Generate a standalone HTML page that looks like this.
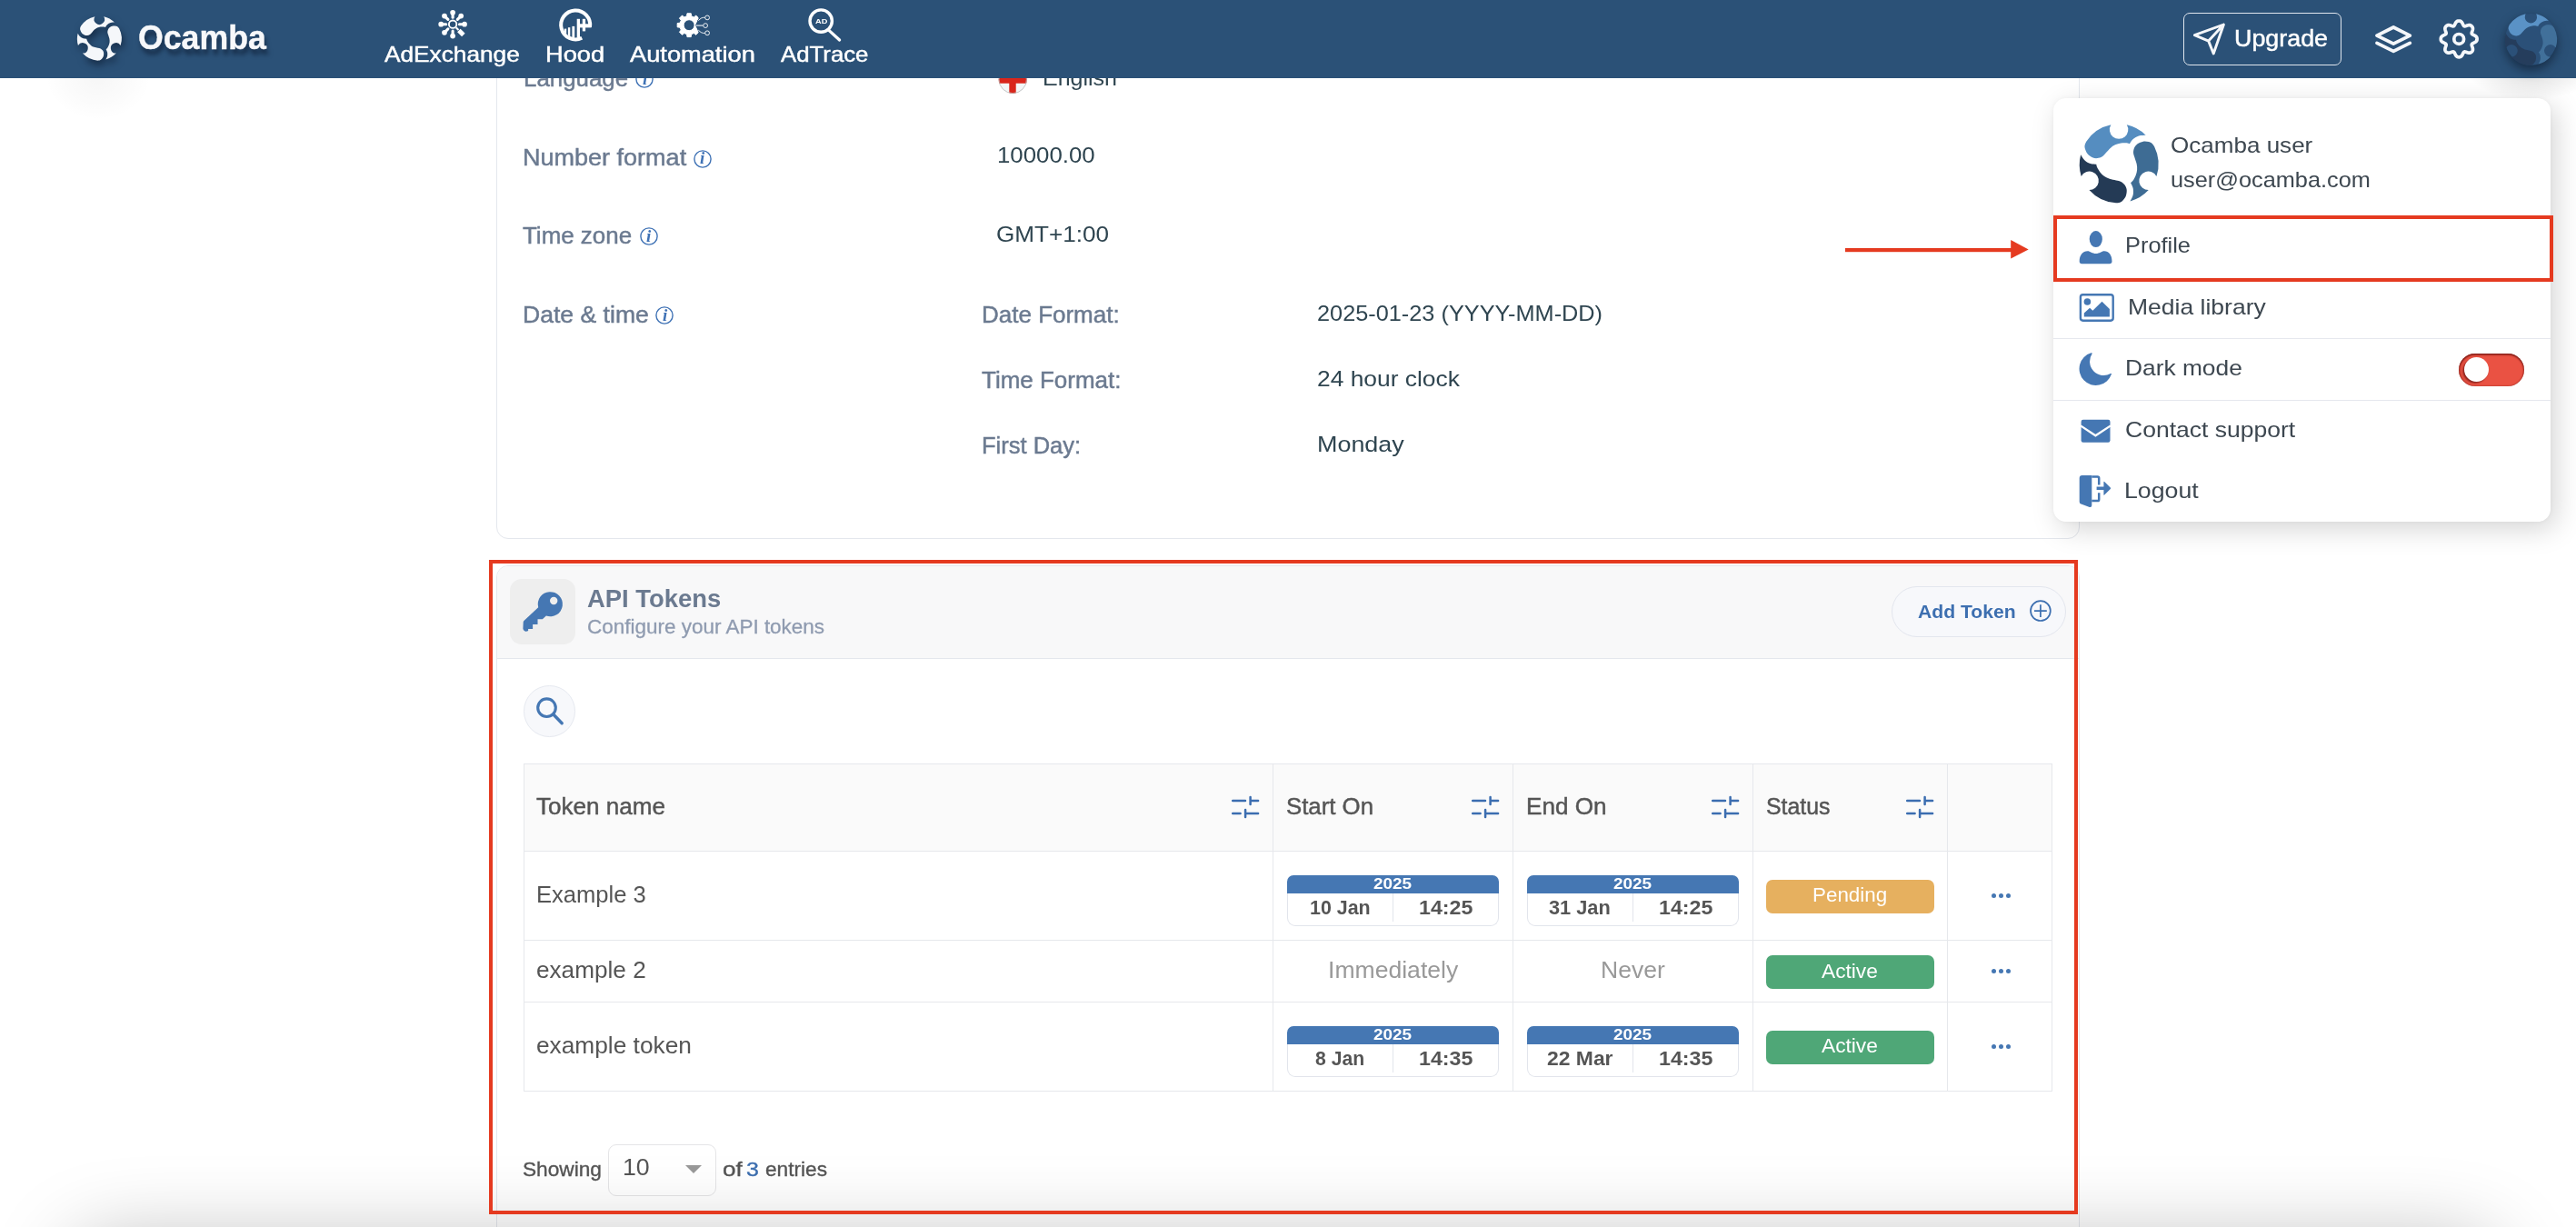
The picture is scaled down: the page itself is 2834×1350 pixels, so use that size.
<!DOCTYPE html>
<html lang="en"><head><meta charset="utf-8"><title>Ocamba - Profile</title>
<style>
html,body{margin:0;padding:0;}
body{width:2834px;height:1350px;overflow:hidden;position:relative;background:#fff;font-family:"Liberation Sans",sans-serif;}
.abs{position:absolute;box-sizing:border-box;}
.t{position:absolute;white-space:pre;line-height:1;z-index:5;transform-origin:0 50%;}
.t.nav{z-index:21;}
.t.dd{z-index:31;}
svg{position:absolute;overflow:visible;}
#nav{left:0;top:0;width:2834px;height:85.5px;background:#2b5177;z-index:20;}
.navi{z-index:21;}
.card{border:1px solid #e4e7ed;border-radius:13px;background:#fff;}
#card1{left:546px;top:-200px;width:1742px;height:792.5px;z-index:1;}
#card2{left:546px;top:621.5px;width:1742px;height:900px;z-index:1;overflow:hidden;}
#card2 .hd{left:0;top:0;width:1742px;height:102.5px;background:#f8f8f9;border-bottom:1px solid #e4e7ed;}
#iconbox{left:561px;top:637px;width:72px;height:72px;border-radius:13px;background:#eeeeee;z-index:2;}
#addbtn{left:2081.3px;top:645px;width:191.7px;height:56.4px;border-radius:29px;border:1px solid #e3e6ee;background:#f7f8fb;z-index:2;}
#searchbtn{left:576.2px;top:754.1px;width:56.6px;height:56.6px;border-radius:50%;border:1px solid #e6e9f0;background:#f7f8fb;z-index:2;}
.red{border:4px solid #e53a20;z-index:40;}
#red1{left:2259px;top:237.2px;width:550px;height:72.6px;}
#red2{left:538px;top:616px;width:1748.2px;height:719.6px;}
/* table */
#tbl{left:576px;top:840px;width:1682px;height:360.7px;border:1px solid #e6e8ec;z-index:2;background:#fff;}
#tbl .th{left:0;top:0;width:1680px;height:95px;background:#fafafa;}
.hl{position:absolute;left:0;width:1680px;height:1px;background:#e6e8ec;}
.vl{position:absolute;top:0;height:358.7px;width:1px;background:#e6e8ec;}
.badge{position:absolute;box-sizing:border-box;width:233px;height:55.8px;z-index:3;}
.badge i{position:absolute;left:0;top:0;width:233px;height:20px;background:#4577b3;border-radius:7px 7px 0 0;}
.badge u{position:absolute;box-sizing:border-box;left:0;top:20px;width:233px;height:35.8px;border:1px solid #e2e5ec;border-top:none;border-radius:0 0 9px 9px;background:#fff;}
.badge b{position:absolute;left:116.3px;top:20px;width:1px;height:31.5px;background:#e2e5ec;}
.st{position:absolute;width:184.7px;height:36.6px;border-radius:7px;z-index:3;}
.st.p{background:#e6b05f;}
.st.a{background:#4fa777;}
.dots{position:absolute;width:21px;height:5px;z-index:3;}
.dots i{position:absolute;top:0;width:5px;height:5px;border-radius:50%;background:#4577b3;}
#sel{left:669.3px;top:1259.2px;width:118.6px;height:56.6px;border:1px solid #e5e5e7;border-radius:9px;background:#fff;z-index:2;}
#tri{left:754.1px;top:1282px;width:0;height:0;border-left:9.1px solid transparent;border-right:9.1px solid transparent;border-top:9.3px solid #999;z-index:3;}
/* dropdown */
#dd{left:2259px;top:108px;width:547px;height:466px;border-radius:14px;background:#fff;z-index:30;box-shadow:6px 8px 30px rgba(0,0,0,.17),0 0 5px rgba(0,0,0,.04);}
.sep{position:absolute;left:2259px;width:547px;height:1px;background:#e6e8ee;z-index:31;}
#tog{left:2705.1px;top:388.9px;width:71.9px;height:36px;border-radius:18px;background:#ea5243;z-index:31;box-shadow:inset 0 1.5px 2px rgba(95,10,5,.75),inset 1.5px 0 2px rgba(95,10,5,.35),inset -1px 0 1.5px rgba(95,10,5,.3);}
#knob{left:2710.8px;top:393px;width:27.3px;height:27.3px;border-radius:50%;background:#fff;z-index:32;box-shadow:-1.5px 1.5px 2px rgba(70,0,0,.6);}
#upg{left:2402px;top:14px;width:174px;height:57.8px;border:1px solid #dfe6ee;border-radius:7px;z-index:21;}
#botshadow{left:80px;top:1366px;width:2666px;height:120px;border-radius:40px;background:#bbb;box-shadow:0 0 90px 0 rgba(0,0,0,.28);z-index:35;}
#logoshadow{left:50px;top:38px;width:116px;height:94px;background:radial-gradient(closest-side,rgba(0,0,0,.035),rgba(0,0,0,.016) 60%,rgba(0,0,0,0));z-index:0;}
#avshadow{left:2715px;top:46px;width:140px;height:64px;background:radial-gradient(closest-side,rgba(0,0,0,.13),rgba(0,0,0,.06) 55%,rgba(0,0,0,0));z-index:19;}
.t.ii{font-family:"Liberation Serif",serif;font-style:italic;font-weight:700;font-size:18.5px;color:#3f72b5;z-index:3;transform:scaleX(1.02);}

</style></head>
<body>
<div id="botshadow" class="abs"></div>
<div id="logoshadow" class="abs"></div>
<div id="avshadow" class="abs"></div>
<div id="card1" class="abs card"></div>
<div id="card2" class="abs card"><div class="abs hd"></div></div>
<div id="iconbox" class="abs"></div>
<div id="addbtn" class="abs"></div>
<div id="searchbtn" class="abs"></div>
<div id="tbl" class="abs">
  <div class="abs th"></div>
  <div class="hl" style="top:95px"></div>
  <div class="hl" style="top:192.9px"></div>
  <div class="hl" style="top:261px"></div>
  <div class="vl" style="left:823px"></div>
  <div class="vl" style="left:1087px"></div>
  <div class="vl" style="left:1351px"></div>
  <div class="vl" style="left:1565px"></div>
</div>
<div class="badge" style="left:1415.7px;top:962.9px"><i></i><u></u><b></b></div>
<div class="badge" style="left:1680px;top:962.9px"><i></i><u></u><b></b></div>
<div class="badge" style="left:1415.7px;top:1128.9px"><i></i><u></u><b></b></div>
<div class="badge" style="left:1680px;top:1128.9px"><i></i><u></u><b></b></div>
<div class="st p" style="left:1943.2px;top:968.2px"></div>
<div class="st a" style="left:1943.2px;top:1051.2px"></div>
<div class="st a" style="left:1943.2px;top:1134.3px"></div>
<div class="dots" style="left:2190.7px;top:982.9px"><i style="left:0"></i><i style="left:8px"></i><i style="left:16px"></i></div>
<div class="dots" style="left:2190.7px;top:1065.7px"><i style="left:0"></i><i style="left:8px"></i><i style="left:16px"></i></div>
<div class="dots" style="left:2190.7px;top:1148.9px"><i style="left:0"></i><i style="left:8px"></i><i style="left:16px"></i></div>
<div id="sel" class="abs"></div>
<div id="tri" class="abs"></div>
<div id="nav" class="abs"></div>
<div id="upg" class="abs"></div>
<div id="dd" class="abs"></div>
<div class="sep" style="top:372px"></div>
<div class="sep" style="top:440.2px"></div>
<div id="tog" class="abs"></div>
<div id="knob" class="abs"></div>
<div id="red1" class="abs red"></div>
<div id="red2" class="abs red"></div>
<svg id="arrow" style="left:2026px;top:260px;z-index:40" width="210" height="30" viewBox="2026 260 210 30"><rect x="2030" y="273" width="184" height="4.2" fill="#e53a20"/><path d="M2212.2 264 L2231.7 274.6 L2212.2 284.4 Z" fill="#e53a20"/></svg>

<svg style="left:74.6px;top:7.7px;z-index:21;filter:drop-shadow(2px 5px 4px rgba(8,20,40,.6));" width="68.6" height="68.6" viewBox="-34.30 -34.30 68.60 68.60"><path transform="rotate(0) scale(24.300)" d="M-0.202 -0.992 A1 1 0 0 0 -0.832 -0.565 C-0.838 -0.549 -0.865 -0.501 -0.870 -0.470 C-0.875 -0.439 -0.875 -0.416 -0.863 -0.380 C-0.851 -0.344 -0.831 -0.291 -0.800 -0.254 C-0.769 -0.217 -0.718 -0.179 -0.676 -0.160 C-0.635 -0.141 -0.593 -0.136 -0.551 -0.139 C-0.509 -0.143 -0.462 -0.159 -0.426 -0.181 C-0.390 -0.203 -0.368 -0.238 -0.333 -0.274 C-0.298 -0.310 -0.258 -0.364 -0.218 -0.399 C-0.178 -0.434 -0.139 -0.461 -0.094 -0.482 C-0.049 -0.503 0.003 -0.516 0.052 -0.524 C0.101 -0.532 0.161 -0.531 0.198 -0.528 C0.235 -0.525 0.261 -0.510 0.274 -0.507 C0.289 -0.527 0.325 -0.594 0.364 -0.628 C0.403 -0.662 0.455 -0.694 0.509 -0.711 C0.563 -0.728 0.657 -0.725 0.686 -0.728 A1 1 0 0 0 0.202 -0.992 A0.2365 0.2365 0 1 1 -0.202 -0.992 Z" fill="#f5f7fa"/><path transform="rotate(120) scale(24.300)" d="M-0.202 -0.992 A1 1 0 0 0 -0.832 -0.565 C-0.838 -0.549 -0.865 -0.501 -0.870 -0.470 C-0.875 -0.439 -0.875 -0.416 -0.863 -0.380 C-0.851 -0.344 -0.831 -0.291 -0.800 -0.254 C-0.769 -0.217 -0.718 -0.179 -0.676 -0.160 C-0.635 -0.141 -0.593 -0.136 -0.551 -0.139 C-0.509 -0.143 -0.462 -0.159 -0.426 -0.181 C-0.390 -0.203 -0.368 -0.238 -0.333 -0.274 C-0.298 -0.310 -0.258 -0.364 -0.218 -0.399 C-0.178 -0.434 -0.139 -0.461 -0.094 -0.482 C-0.049 -0.503 0.003 -0.516 0.052 -0.524 C0.101 -0.532 0.161 -0.531 0.198 -0.528 C0.235 -0.525 0.261 -0.510 0.274 -0.507 C0.289 -0.527 0.325 -0.594 0.364 -0.628 C0.403 -0.662 0.455 -0.694 0.509 -0.711 C0.563 -0.728 0.657 -0.725 0.686 -0.728 A1 1 0 0 0 0.202 -0.992 A0.2365 0.2365 0 1 1 -0.202 -0.992 Z" fill="#f5f7fa"/><path transform="rotate(240) scale(24.300)" d="M-0.202 -0.992 A1 1 0 0 0 -0.832 -0.565 C-0.838 -0.549 -0.865 -0.501 -0.870 -0.470 C-0.875 -0.439 -0.875 -0.416 -0.863 -0.380 C-0.851 -0.344 -0.831 -0.291 -0.800 -0.254 C-0.769 -0.217 -0.718 -0.179 -0.676 -0.160 C-0.635 -0.141 -0.593 -0.136 -0.551 -0.139 C-0.509 -0.143 -0.462 -0.159 -0.426 -0.181 C-0.390 -0.203 -0.368 -0.238 -0.333 -0.274 C-0.298 -0.310 -0.258 -0.364 -0.218 -0.399 C-0.178 -0.434 -0.139 -0.461 -0.094 -0.482 C-0.049 -0.503 0.003 -0.516 0.052 -0.524 C0.101 -0.532 0.161 -0.531 0.198 -0.528 C0.235 -0.525 0.261 -0.510 0.274 -0.507 C0.289 -0.527 0.325 -0.594 0.364 -0.628 C0.403 -0.662 0.455 -0.694 0.509 -0.711 C0.563 -0.728 0.657 -0.725 0.686 -0.728 A1 1 0 0 0 0.202 -0.992 A0.2365 0.2365 0 1 1 -0.202 -0.992 Z" fill="#f5f7fa"/></svg>
<svg style="left:478px;top:6px;z-index:21" width="42" height="42" viewBox="478 6 42 42"><circle cx="498.1" cy="26.7" r="4.2" fill="none" stroke="#fff" stroke-width="1.9"/><path d="M505.50 26.70 L510.70 26.70" stroke="#fff" stroke-width="3.1" stroke-linecap="round"/><circle cx="511.00" cy="26.70" r="2.85" fill="#fff"/><path d="M501.64 30.24 L504.46 33.06" stroke="#fff" stroke-width="2" /><path d="M504.82 33.42 L509.84 38.44" stroke="#fff" stroke-width="5" stroke-linecap="butt"/><path d="M498.10 34.10 L498.10 39.30" stroke="#fff" stroke-width="3.1" stroke-linecap="round"/><circle cx="498.10" cy="39.60" r="2.85" fill="#fff"/><path d="M492.87 31.93 L489.19 35.61" stroke="#fff" stroke-width="3.1" stroke-linecap="round"/><circle cx="488.98" cy="35.82" r="2.85" fill="#fff"/><path d="M490.70 26.70 L485.50 26.70" stroke="#fff" stroke-width="3.1" stroke-linecap="round"/><circle cx="485.20" cy="26.70" r="2.85" fill="#fff"/><path d="M492.87 21.47 L489.19 17.79" stroke="#fff" stroke-width="3.1" stroke-linecap="round"/><circle cx="488.98" cy="17.58" r="2.85" fill="#fff"/><path d="M498.10 19.30 L498.10 14.10" stroke="#fff" stroke-width="3.1" stroke-linecap="round"/><circle cx="498.10" cy="13.80" r="2.85" fill="#fff"/><path d="M503.33 21.47 L507.01 17.79" stroke="#fff" stroke-width="3.1" stroke-linecap="round"/><circle cx="507.22" cy="17.58" r="2.85" fill="#fff"/></svg>
<svg style="left:612px;top:6px;z-index:21" width="44" height="44" viewBox="612 6 44 44"><path d="M640.21 41.78 A16.0 16.0 0 1 1 649.04 29.63" fill="none" stroke="#fff" stroke-width="4"/><clipPath id="hc"><circle cx="633.2" cy="27.4" r="14.4"/></clipPath><g clip-path="url(#hc)" fill="#fff"><rect x="620.8" y="31.6" width="2.4" height="12"/><rect x="624.9" y="30.2" width="2.4" height="14"/><rect x="629.4" y="28.9" width="2.8" height="16"/><rect x="634.7" y="20.8" width="3.3" height="22"/></g><g fill="#fff"><rect x="640.8" y="20.8" width="3.3" height="13.6"/><rect x="637" y="26.3" width="13.5" height="4.1"/></g></svg>
<svg style="left:742px;top:10px;z-index:21" width="42" height="36" viewBox="742 10 42 36"><clipPath id="ac"><path d="M740 8 H767.5 L768.5 20.5 L765 27.7 L768.5 35 L767.5 48 H740 Z"/></clipPath><g clip-path="url(#ac)"><path d="M755.62 17.70 L755.95 14.78 L760.25 14.78 L760.58 17.70 L763.41 18.88 L765.72 17.04 L768.76 20.08 L766.92 22.39 L768.10 25.22 L771.02 25.55 L771.02 29.85 L768.10 30.18 L766.92 33.01 L768.76 35.32 L765.72 38.36 L763.41 36.52 L760.58 37.70 L760.25 40.62 L755.95 40.62 L755.62 37.70 L752.79 36.52 L750.48 38.36 L747.44 35.32 L749.28 33.01 L748.10 30.18 L745.18 29.85 L745.18 25.55 L748.10 25.22 L749.28 22.39 L747.44 20.08 L750.48 17.04 L752.79 18.88 Z M764.1 27.7 A6 6 0 1 0 752.1 27.7 A6 6 0 1 0 764.1 27.7 Z" fill="#fff" fill-rule="evenodd" stroke="#fff" stroke-width="1" stroke-linejoin="round"/></g><g fill="none" stroke="#fff" stroke-width="0.9"><circle cx="778.1" cy="19.4" r="2.4"/><circle cx="776.1" cy="28.1" r="2.4"/><circle cx="778.1" cy="36.3" r="2.4"/><path d="M768.3 22.6 Q771.5 19.3 773.5 19.3 H775.7"/><path d="M768.3 33.2 Q771.5 36.4 773.5 36.4 H775.7"/></g><path d="M765.5 28.1 H773.6" stroke="#c9d4e0" stroke-width="1.4"/></svg>
<svg style="left:886px;top:6px;z-index:21" width="44" height="44" viewBox="886 6 44 44"><circle cx="903.2" cy="23.1" r="12.2" fill="none" stroke="#fff" stroke-width="3.4"/><path d="M912.2 33.6 L923.6 44" stroke="#fff" stroke-width="3.3" stroke-linecap="round"/></svg>
<svg style="left:2410px;top:22px;z-index:22" width="42" height="42" viewBox="2410 22 42 42"><path d="M2446.4 27 L2414.4 38.7 L2429.7 45.1 L2435.2 59 Z M2429.7 45.1 L2446.4 27" fill="none" stroke="#f5f7fa" stroke-width="2.9" stroke-linejoin="round" stroke-linecap="round"/></svg>
<svg style="left:2610px;top:24px;z-index:22" width="46" height="38" viewBox="2610 24 46 38"><g fill="none" stroke="#f5f7fa" stroke-width="3.8" stroke-linejoin="round" stroke-linecap="round"><path d="M2633.2 30 L2651.3 39.1 L2633.2 48.1 L2615 39.1 Z"/><path d="M2615 47.4 L2633.2 56.4 L2651.3 47.4"/></g></svg>
<svg style="left:2680px;top:18px;z-index:22" width="50" height="50" viewBox="2680 18 50 50"><path d="M2725.10 42.90 L2725.09 43.29 L2725.06 43.68 L2724.99 44.07 L2724.87 44.45 L2724.69 44.82 L2724.46 45.18 L2724.17 45.52 L2723.83 45.85 L2723.44 46.16 L2723.01 46.44 L2722.55 46.71 L2722.08 46.95 L2721.61 47.18 L2721.15 47.40 L2720.72 47.61 L2720.32 47.81 L2719.98 48.03 L2719.70 48.25 L2719.48 48.49 L2719.34 48.76 L2719.25 49.05 L2719.24 49.37 L2719.28 49.73 L2719.37 50.12 L2719.50 50.54 L2719.66 51.00 L2719.83 51.47 L2720.00 51.97 L2720.16 52.48 L2720.30 52.99 L2720.40 53.49 L2720.46 53.99 L2720.47 54.46 L2720.43 54.91 L2720.34 55.33 L2720.20 55.71 L2720.02 56.07 L2719.79 56.39 L2719.54 56.69 L2719.27 56.97 L2718.99 57.24 L2718.69 57.49 L2718.37 57.72 L2718.01 57.90 L2717.63 58.04 L2717.21 58.13 L2716.76 58.17 L2716.29 58.16 L2715.79 58.10 L2715.29 58.00 L2714.78 57.86 L2714.27 57.70 L2713.77 57.53 L2713.30 57.36 L2712.84 57.20 L2712.42 57.07 L2712.03 56.98 L2711.67 56.94 L2711.35 56.95 L2711.06 57.04 L2710.79 57.18 L2710.55 57.40 L2710.33 57.68 L2710.11 58.02 L2709.91 58.42 L2709.70 58.85 L2709.48 59.31 L2709.25 59.78 L2709.01 60.25 L2708.74 60.71 L2708.46 61.14 L2708.15 61.53 L2707.82 61.87 L2707.48 62.16 L2707.12 62.39 L2706.75 62.57 L2706.37 62.69 L2705.98 62.76 L2705.59 62.79 L2705.20 62.80 L2704.81 62.79 L2704.42 62.76 L2704.03 62.69 L2703.65 62.57 L2703.28 62.39 L2702.92 62.16 L2702.58 61.87 L2702.25 61.53 L2701.94 61.14 L2701.66 60.71 L2701.39 60.25 L2701.15 59.78 L2700.92 59.31 L2700.70 58.85 L2700.49 58.42 L2700.29 58.02 L2700.07 57.68 L2699.85 57.40 L2699.61 57.18 L2699.34 57.04 L2699.05 56.95 L2698.73 56.94 L2698.37 56.98 L2697.98 57.07 L2697.56 57.20 L2697.10 57.36 L2696.63 57.53 L2696.13 57.70 L2695.62 57.86 L2695.11 58.00 L2694.61 58.10 L2694.11 58.16 L2693.64 58.17 L2693.19 58.13 L2692.77 58.04 L2692.39 57.90 L2692.03 57.72 L2691.71 57.49 L2691.41 57.24 L2691.13 56.97 L2690.86 56.69 L2690.61 56.39 L2690.38 56.07 L2690.20 55.71 L2690.06 55.33 L2689.97 54.91 L2689.93 54.46 L2689.94 53.99 L2690.00 53.49 L2690.10 52.99 L2690.24 52.48 L2690.40 51.97 L2690.57 51.47 L2690.74 51.00 L2690.90 50.54 L2691.03 50.12 L2691.12 49.73 L2691.16 49.37 L2691.15 49.05 L2691.06 48.76 L2690.92 48.49 L2690.70 48.25 L2690.42 48.03 L2690.08 47.81 L2689.68 47.61 L2689.25 47.40 L2688.79 47.18 L2688.32 46.95 L2687.85 46.71 L2687.39 46.44 L2686.96 46.16 L2686.57 45.85 L2686.23 45.52 L2685.94 45.18 L2685.71 44.82 L2685.53 44.45 L2685.41 44.07 L2685.34 43.68 L2685.31 43.29 L2685.30 42.90 L2685.31 42.51 L2685.34 42.12 L2685.41 41.73 L2685.53 41.35 L2685.71 40.98 L2685.94 40.62 L2686.23 40.28 L2686.57 39.95 L2686.96 39.64 L2687.39 39.36 L2687.85 39.09 L2688.32 38.85 L2688.79 38.62 L2689.25 38.40 L2689.68 38.19 L2690.08 37.99 L2690.42 37.77 L2690.70 37.55 L2690.92 37.31 L2691.06 37.04 L2691.15 36.75 L2691.16 36.43 L2691.12 36.07 L2691.03 35.68 L2690.90 35.26 L2690.74 34.80 L2690.57 34.33 L2690.40 33.83 L2690.24 33.32 L2690.10 32.81 L2690.00 32.31 L2689.94 31.81 L2689.93 31.34 L2689.97 30.89 L2690.06 30.47 L2690.20 30.09 L2690.38 29.73 L2690.61 29.41 L2690.86 29.11 L2691.13 28.83 L2691.41 28.56 L2691.71 28.31 L2692.03 28.08 L2692.39 27.90 L2692.77 27.76 L2693.19 27.67 L2693.64 27.63 L2694.11 27.64 L2694.61 27.70 L2695.11 27.80 L2695.62 27.94 L2696.13 28.10 L2696.63 28.27 L2697.10 28.44 L2697.56 28.60 L2697.98 28.73 L2698.37 28.82 L2698.73 28.86 L2699.05 28.85 L2699.34 28.76 L2699.61 28.62 L2699.85 28.40 L2700.07 28.12 L2700.29 27.78 L2700.49 27.38 L2700.70 26.95 L2700.92 26.49 L2701.15 26.02 L2701.39 25.55 L2701.66 25.09 L2701.94 24.66 L2702.25 24.27 L2702.58 23.93 L2702.92 23.64 L2703.28 23.41 L2703.65 23.23 L2704.03 23.11 L2704.42 23.04 L2704.81 23.01 L2705.20 23.00 L2705.59 23.01 L2705.98 23.04 L2706.37 23.11 L2706.75 23.23 L2707.12 23.41 L2707.48 23.64 L2707.82 23.93 L2708.15 24.27 L2708.46 24.66 L2708.74 25.09 L2709.01 25.55 L2709.25 26.02 L2709.48 26.49 L2709.70 26.95 L2709.91 27.38 L2710.11 27.78 L2710.33 28.12 L2710.55 28.40 L2710.79 28.62 L2711.06 28.76 L2711.35 28.85 L2711.67 28.86 L2712.03 28.82 L2712.42 28.73 L2712.84 28.60 L2713.30 28.44 L2713.77 28.27 L2714.27 28.10 L2714.78 27.94 L2715.29 27.80 L2715.79 27.70 L2716.29 27.64 L2716.76 27.63 L2717.21 27.67 L2717.63 27.76 L2718.01 27.90 L2718.37 28.08 L2718.69 28.31 L2718.99 28.56 L2719.27 28.83 L2719.54 29.11 L2719.79 29.41 L2720.02 29.73 L2720.20 30.09 L2720.34 30.47 L2720.43 30.89 L2720.47 31.34 L2720.46 31.81 L2720.40 32.31 L2720.30 32.81 L2720.16 33.32 L2720.00 33.83 L2719.83 34.33 L2719.66 34.80 L2719.50 35.26 L2719.37 35.68 L2719.28 36.07 L2719.24 36.43 L2719.25 36.75 L2719.34 37.04 L2719.48 37.31 L2719.70 37.55 L2719.98 37.77 L2720.32 37.99 L2720.72 38.19 L2721.15 38.40 L2721.61 38.62 L2722.08 38.85 L2722.55 39.09 L2723.01 39.36 L2723.44 39.64 L2723.83 39.95 L2724.17 40.28 L2724.46 40.62 L2724.69 40.98 L2724.87 41.35 L2724.99 41.73 L2725.06 42.12 L2725.09 42.51 Z" fill="none" stroke="#f5f7fa" stroke-width="3.7" stroke-linejoin="round"/><circle cx="2705.2" cy="42.9" r="5.4" fill="none" stroke="#f5f7fa" stroke-width="3.7"/></svg>
<svg style="left:2746.4px;top:4.7px;z-index:22;filter:drop-shadow(0px 5px 6px rgba(5,15,30,.55));" width="76.8" height="76.8" viewBox="-38.40 -38.40 76.80 76.80"><circle r="28.40" fill="#2b5078"/><path transform="rotate(0) scale(28.400)" d="M-0.202 -0.992 A1 1 0 0 0 -0.832 -0.565 C-0.838 -0.549 -0.865 -0.501 -0.870 -0.470 C-0.875 -0.439 -0.875 -0.416 -0.863 -0.380 C-0.851 -0.344 -0.831 -0.291 -0.800 -0.254 C-0.769 -0.217 -0.718 -0.179 -0.676 -0.160 C-0.635 -0.141 -0.593 -0.136 -0.551 -0.139 C-0.509 -0.143 -0.462 -0.159 -0.426 -0.181 C-0.390 -0.203 -0.368 -0.238 -0.333 -0.274 C-0.298 -0.310 -0.258 -0.364 -0.218 -0.399 C-0.178 -0.434 -0.139 -0.461 -0.094 -0.482 C-0.049 -0.503 0.003 -0.516 0.052 -0.524 C0.101 -0.532 0.161 -0.531 0.198 -0.528 C0.235 -0.525 0.261 -0.510 0.274 -0.507 C0.289 -0.527 0.325 -0.594 0.364 -0.628 C0.403 -0.662 0.455 -0.694 0.509 -0.711 C0.563 -0.728 0.657 -0.725 0.686 -0.728 A1 1 0 0 0 0.202 -0.992 A0.2365 0.2365 0 1 1 -0.202 -0.992 Z" fill="#5a92c6"/><path transform="rotate(120) scale(28.400)" d="M-0.202 -0.992 A1 1 0 0 0 -0.832 -0.565 C-0.838 -0.549 -0.865 -0.501 -0.870 -0.470 C-0.875 -0.439 -0.875 -0.416 -0.863 -0.380 C-0.851 -0.344 -0.831 -0.291 -0.800 -0.254 C-0.769 -0.217 -0.718 -0.179 -0.676 -0.160 C-0.635 -0.141 -0.593 -0.136 -0.551 -0.139 C-0.509 -0.143 -0.462 -0.159 -0.426 -0.181 C-0.390 -0.203 -0.368 -0.238 -0.333 -0.274 C-0.298 -0.310 -0.258 -0.364 -0.218 -0.399 C-0.178 -0.434 -0.139 -0.461 -0.094 -0.482 C-0.049 -0.503 0.003 -0.516 0.052 -0.524 C0.101 -0.532 0.161 -0.531 0.198 -0.528 C0.235 -0.525 0.261 -0.510 0.274 -0.507 C0.289 -0.527 0.325 -0.594 0.364 -0.628 C0.403 -0.662 0.455 -0.694 0.509 -0.711 C0.563 -0.728 0.657 -0.725 0.686 -0.728 A1 1 0 0 0 0.202 -0.992 A0.2365 0.2365 0 1 1 -0.202 -0.992 Z" fill="#41709a"/><path transform="rotate(240) scale(28.400)" d="M-0.202 -0.992 A1 1 0 0 0 -0.832 -0.565 C-0.838 -0.549 -0.865 -0.501 -0.870 -0.470 C-0.875 -0.439 -0.875 -0.416 -0.863 -0.380 C-0.851 -0.344 -0.831 -0.291 -0.800 -0.254 C-0.769 -0.217 -0.718 -0.179 -0.676 -0.160 C-0.635 -0.141 -0.593 -0.136 -0.551 -0.139 C-0.509 -0.143 -0.462 -0.159 -0.426 -0.181 C-0.390 -0.203 -0.368 -0.238 -0.333 -0.274 C-0.298 -0.310 -0.258 -0.364 -0.218 -0.399 C-0.178 -0.434 -0.139 -0.461 -0.094 -0.482 C-0.049 -0.503 0.003 -0.516 0.052 -0.524 C0.101 -0.532 0.161 -0.531 0.198 -0.528 C0.235 -0.525 0.261 -0.510 0.274 -0.507 C0.289 -0.527 0.325 -0.594 0.364 -0.628 C0.403 -0.662 0.455 -0.694 0.509 -0.711 C0.563 -0.728 0.657 -0.725 0.686 -0.728 A1 1 0 0 0 0.202 -0.992 A0.2365 0.2365 0 1 1 -0.202 -0.992 Z" fill="#253d5c"/></svg>
<svg style="left:2277.9px;top:126.8px;z-index:31;" width="106.2" height="106.2" viewBox="-53.10 -53.10 106.20 106.20"><path transform="rotate(0) scale(43.100)" d="M-0.202 -0.992 A1 1 0 0 0 -0.832 -0.565 C-0.838 -0.549 -0.865 -0.501 -0.870 -0.470 C-0.875 -0.439 -0.875 -0.416 -0.863 -0.380 C-0.851 -0.344 -0.831 -0.291 -0.800 -0.254 C-0.769 -0.217 -0.718 -0.179 -0.676 -0.160 C-0.635 -0.141 -0.593 -0.136 -0.551 -0.139 C-0.509 -0.143 -0.462 -0.159 -0.426 -0.181 C-0.390 -0.203 -0.368 -0.238 -0.333 -0.274 C-0.298 -0.310 -0.258 -0.364 -0.218 -0.399 C-0.178 -0.434 -0.139 -0.461 -0.094 -0.482 C-0.049 -0.503 0.003 -0.516 0.052 -0.524 C0.101 -0.532 0.161 -0.531 0.198 -0.528 C0.235 -0.525 0.261 -0.510 0.274 -0.507 C0.289 -0.527 0.325 -0.594 0.364 -0.628 C0.403 -0.662 0.455 -0.694 0.509 -0.711 C0.563 -0.728 0.657 -0.725 0.686 -0.728 A1 1 0 0 0 0.202 -0.992 A0.2365 0.2365 0 1 1 -0.202 -0.992 Z" fill="#558dc0"/><path transform="rotate(120) scale(43.100)" d="M-0.202 -0.992 A1 1 0 0 0 -0.832 -0.565 C-0.838 -0.549 -0.865 -0.501 -0.870 -0.470 C-0.875 -0.439 -0.875 -0.416 -0.863 -0.380 C-0.851 -0.344 -0.831 -0.291 -0.800 -0.254 C-0.769 -0.217 -0.718 -0.179 -0.676 -0.160 C-0.635 -0.141 -0.593 -0.136 -0.551 -0.139 C-0.509 -0.143 -0.462 -0.159 -0.426 -0.181 C-0.390 -0.203 -0.368 -0.238 -0.333 -0.274 C-0.298 -0.310 -0.258 -0.364 -0.218 -0.399 C-0.178 -0.434 -0.139 -0.461 -0.094 -0.482 C-0.049 -0.503 0.003 -0.516 0.052 -0.524 C0.101 -0.532 0.161 -0.531 0.198 -0.528 C0.235 -0.525 0.261 -0.510 0.274 -0.507 C0.289 -0.527 0.325 -0.594 0.364 -0.628 C0.403 -0.662 0.455 -0.694 0.509 -0.711 C0.563 -0.728 0.657 -0.725 0.686 -0.728 A1 1 0 0 0 0.202 -0.992 A0.2365 0.2365 0 1 1 -0.202 -0.992 Z" fill="#3e6c94"/><path transform="rotate(240) scale(43.100)" d="M-0.202 -0.992 A1 1 0 0 0 -0.832 -0.565 C-0.838 -0.549 -0.865 -0.501 -0.870 -0.470 C-0.875 -0.439 -0.875 -0.416 -0.863 -0.380 C-0.851 -0.344 -0.831 -0.291 -0.800 -0.254 C-0.769 -0.217 -0.718 -0.179 -0.676 -0.160 C-0.635 -0.141 -0.593 -0.136 -0.551 -0.139 C-0.509 -0.143 -0.462 -0.159 -0.426 -0.181 C-0.390 -0.203 -0.368 -0.238 -0.333 -0.274 C-0.298 -0.310 -0.258 -0.364 -0.218 -0.399 C-0.178 -0.434 -0.139 -0.461 -0.094 -0.482 C-0.049 -0.503 0.003 -0.516 0.052 -0.524 C0.101 -0.532 0.161 -0.531 0.198 -0.528 C0.235 -0.525 0.261 -0.510 0.274 -0.507 C0.289 -0.527 0.325 -0.594 0.364 -0.628 C0.403 -0.662 0.455 -0.694 0.509 -0.711 C0.563 -0.728 0.657 -0.725 0.686 -0.728 A1 1 0 0 0 0.202 -0.992 A0.2365 0.2365 0 1 1 -0.202 -0.992 Z" fill="#243a55"/></svg>
<svg style="left:2284px;top:250px;z-index:31" width="44" height="44" viewBox="2284 250 44 44"><ellipse cx="2305.8" cy="263.1" rx="7.1" ry="9" fill="#4577b3"/><path d="M2287.7 287.5 C2287.7 280.5 2291.5 276.2 2296.6 276.2 C2299.5 276.2 2301.8 279 2305.8 279 C2309.8 279 2312 276.2 2315 276.2 C2320 276.2 2323.5 280.5 2323.5 287.5 Q2323.5 290.2 2320.8 290.2 H2290.4 Q2287.7 290.2 2287.7 287.5 Z" fill="#4577b3"/></svg>
<svg style="left:2284px;top:320px;z-index:31" width="46" height="38" viewBox="2284 320 46 38"><rect x="2288.9" y="324.2" width="35.8" height="28.5" rx="2.6" fill="none" stroke="#4577b3" stroke-width="2.4"/><circle cx="2296.4" cy="332" r="3.8" fill="#4577b3"/><path d="M2292.8 348.5 V344.4 L2299.1 338.8 L2302.3 341.7 L2312.5 331.7 L2320.9 339.9 V348.5 Z" fill="#4577b3"/></svg>
<svg style="left:2284px;top:385px;z-index:31" width="44" height="44" viewBox="2284 385 44 44"><path d="M2300.6 388.3 A18.2 18.2 0 1 0 2322.9 411.8 Q2323.6 410.6 2322 411 A15.3 15.3 0 0 1 2301.6 389.3 Q2302 388 2300.6 388.3 Z" fill="#4577b3"/></svg>
<svg style="left:2286px;top:458px;z-index:31" width="40" height="32" viewBox="2286 458 40 32"><rect x="2289.6" y="461.7" width="31.9" height="25" rx="2.2" fill="#4577b3"/><path d="M2289 468.4 L2305.4 479.3 L2322 468.4" fill="none" stroke="#fff" stroke-width="2.3"/></svg>
<svg style="left:2284px;top:520px;z-index:31" width="42" height="42" viewBox="2284 520 42 42"><path d="M2287.7 526 Q2287.7 523 2290.7 523 H2301.3 V556 Q2301.3 558.6 2298.8 558 L2289.5 554.6 Q2287.7 554 2287.7 552 Z" fill="#4577b3"/><path d="M2301.3 524.6 H2307.6 Q2309.2 524.6 2309.2 526.2 V533.6 M2309.2 542.2 V549.4 Q2309.2 551 2307.6 551 H2301.3" fill="none" stroke="#4577b3" stroke-width="2.5"/><path d="M2306.6 535.5 H2314.4 V530.3 Q2314.4 529.4 2315.2 530 L2321.8 536.6 Q2322.4 537.3 2321.8 538 L2315.2 544.5 Q2314.4 545.2 2314.4 544.3 V539.1 H2306.6 Z" fill="#4577b3"/></svg>
<svg style="left:570px;top:646px;z-index:3" width="54" height="54" viewBox="570 646 54 54"><path fill-rule="evenodd" fill="#4577b3" d="M592.2 668.3 A13.6 13.6 0 1 1 600.9 677.6 L596.8 681.2 H591.5 V687 H586.1 V692.1 H581.1 V694 Q579.5 695.2 577.6 694.6 Q575.5 693.4 575.4 691.8 L575.7 684.6 Q575.7 683.6 576.4 682.9 Z M613.4 661 A4.2 4.2 0 1 0 605 661 A4.2 4.2 0 1 0 613.4 661 Z"/></svg>
<svg style="left:586px;top:764px;z-index:3" width="38" height="38" viewBox="586 764 38 38"><circle cx="601.5" cy="778.7" r="9.8" fill="none" stroke="#4577b3" stroke-width="3.1"/><path d="M609 786.2 L618.2 795.8" stroke="#4577b3" stroke-width="3.4" stroke-linecap="round"/></svg>
<svg style="left:1352.0px;top:873px;z-index:3" width="36" height="30" viewBox="1352 873 36 30"><path d="M1356.2 880.9 H1370 M1375.6 876.9 V885 M1375.6 880.9 H1384.1 M1356.2 894.9 H1364.6 M1370.1 891 V898.9 M1370.1 894.9 H1384.1" fill="none" stroke="#3b6db0" stroke-width="2.5" stroke-linecap="round"/></svg>
<svg style="left:1616.2px;top:873px;z-index:3" width="36" height="30" viewBox="1352 873 36 30"><path d="M1356.2 880.9 H1370 M1375.6 876.9 V885 M1375.6 880.9 H1384.1 M1356.2 894.9 H1364.6 M1370.1 891 V898.9 M1370.1 894.9 H1384.1" fill="none" stroke="#3b6db0" stroke-width="2.5" stroke-linecap="round"/></svg>
<svg style="left:1880.2px;top:873px;z-index:3" width="36" height="30" viewBox="1352 873 36 30"><path d="M1356.2 880.9 H1370 M1375.6 876.9 V885 M1375.6 880.9 H1384.1 M1356.2 894.9 H1364.6 M1370.1 891 V898.9 M1370.1 894.9 H1384.1" fill="none" stroke="#3b6db0" stroke-width="2.5" stroke-linecap="round"/></svg>
<svg style="left:2094.1px;top:873px;z-index:3" width="36" height="30" viewBox="1352 873 36 30"><path d="M1356.2 880.9 H1370 M1375.6 876.9 V885 M1375.6 880.9 H1384.1 M1356.2 894.9 H1364.6 M1370.1 891 V898.9 M1370.1 894.9 H1384.1" fill="none" stroke="#3b6db0" stroke-width="2.5" stroke-linecap="round"/></svg>
<svg style="left:2230px;top:658px;z-index:3" width="30" height="30" viewBox="2230 658 30 30"><circle cx="2244.9" cy="672.1" r="10.9" fill="none" stroke="#3d6fb0" stroke-width="1.7"/><path d="M2238 672.1 H2251.8 M2244.9 665.2 V679" stroke="#3d6fb0" stroke-width="1.7"/></svg>
<svg style="left:697.3px;top:75.4px;z-index:3" width="24" height="24" viewBox="-12 -12 24 24"><circle r="9.1" fill="none" stroke="#3f72b5" stroke-width="1.4"/></svg><span class="t ii" style="left:706.5px;top:78.2px">i</span>
<svg style="left:760.7px;top:162.5px;z-index:3" width="24" height="24" viewBox="-12 -12 24 24"><circle r="9.1" fill="none" stroke="#3f72b5" stroke-width="1.4"/></svg><span class="t ii" style="left:769.9px;top:165.3px">i</span>
<svg style="left:701.7px;top:248.3px;z-index:3" width="24" height="24" viewBox="-12 -12 24 24"><circle r="9.1" fill="none" stroke="#3f72b5" stroke-width="1.4"/></svg><span class="t ii" style="left:710.9px;top:251.1px">i</span>
<svg style="left:719.3px;top:335.3px;z-index:3" width="24" height="24" viewBox="-12 -12 24 24"><circle r="9.1" fill="none" stroke="#3f72b5" stroke-width="1.4"/></svg><span class="t ii" style="left:728.5px;top:338.1px">i</span>
<svg style="left:1098px;top:71px;z-index:3" width="33" height="33" viewBox="1098 71 33 33"><clipPath id="fc"><circle cx="1114.2" cy="87.4" r="15.5"/></clipPath><g clip-path="url(#fc)"><rect x="1098" y="71" width="33" height="33" fill="#f4f7f8"/><rect x="1110.3" y="71" width="7.4" height="33" fill="#d9261c"/><rect x="1098" y="83.1" width="33" height="8.6" fill="#d9261c"/></g><circle cx="1114.2" cy="87.4" r="15.2" fill="none" stroke="#b9b9b9" stroke-width="0.8"/></svg>
<div id="texts">
<span class="t nav" style="left:151.8px;top:22.8px;font-size:37px;color:#f7f8fa;transform:scaleX(0.9647);font-weight:700;-webkit-text-stroke:0.4px #f7f8fa;text-shadow:2px 6px 5px rgba(8,20,40,.6);">Ocamba</span>
<span class="t nav" style="left:423.0px;top:48.1px;font-size:24px;color:#ffffff;transform:scaleX(1.0932);-webkit-text-stroke:0.45px #ffffff;">AdExchange</span>
<span class="t nav" style="left:600.4px;top:48.1px;font-size:24px;color:#ffffff;transform:scaleX(1.1343);-webkit-text-stroke:0.45px #ffffff;">Hood</span>
<span class="t nav" style="left:693.1px;top:48.1px;font-size:24px;color:#ffffff;transform:scaleX(1.1349);-webkit-text-stroke:0.45px #ffffff;">Automation</span>
<span class="t nav" style="left:859.0px;top:48.1px;font-size:24px;color:#ffffff;transform:scaleX(1.0740);-webkit-text-stroke:0.45px #ffffff;">AdTrace</span>
<span class="t nav" style="left:896.7px;top:19.7px;font-size:8px;color:#ffffff;transform:scaleX(1.1536);font-weight:700;">AD</span>
<span class="t nav" style="left:2457.5px;top:28.6px;font-size:26px;color:#ffffff;transform:scaleX(1.0332);-webkit-text-stroke:0.45px #ffffff;">Upgrade</span>
<span class="t dd" style="left:2387.9px;top:148.1px;font-size:24px;color:#3d4750;transform:scaleX(1.0848);">Ocamba user</span>
<span class="t dd" style="left:2387.9px;top:185.9px;font-size:24px;color:#3d4750;transform:scaleX(1.0546);">user@ocamba.com</span>
<span class="t dd" style="left:2338.3px;top:258.3px;font-size:24px;color:#3d4750;transform:scaleX(1.0573);">Profile</span>
<span class="t dd" style="left:2340.5px;top:325.8px;font-size:24px;color:#3d4750;transform:scaleX(1.1043);">Media library</span>
<span class="t dd" style="left:2338.0px;top:393.3px;font-size:24px;color:#3d4750;transform:scaleX(1.0974);">Dark mode</span>
<span class="t dd" style="left:2338.0px;top:461.0px;font-size:24px;color:#3d4750;transform:scaleX(1.1050);">Contact support</span>
<span class="t dd" style="left:2337.3px;top:528.3px;font-size:24px;color:#3d4750;transform:scaleX(1.1121);">Logout</span>
<span class="t " style="left:576.0px;top:74.0px;font-size:25px;color:#6b7a90;transform:scaleX(1.0345);-webkit-text-stroke:0.45px #6b7a90;">Language</span>
<span class="t " style="left:574.9px;top:160.9px;font-size:25px;color:#6b7a90;transform:scaleX(1.0806);-webkit-text-stroke:0.45px #6b7a90;">Number format</span>
<span class="t " style="left:575.0px;top:246.7px;font-size:25px;color:#6b7a90;transform:scaleX(1.0369);-webkit-text-stroke:0.45px #6b7a90;">Time zone</span>
<span class="t " style="left:574.9px;top:333.6px;font-size:25px;color:#6b7a90;transform:scaleX(1.0629);-webkit-text-stroke:0.45px #6b7a90;">Date &amp; time</span>
<span class="t " style="left:1147.0px;top:74.0px;font-size:24.5px;color:#2f4550;transform:scaleX(1.0204);">English</span>
<span class="t " style="left:1096.8px;top:159.3px;font-size:24.5px;color:#2f4550;transform:scaleX(1.0536);">10000.00</span>
<span class="t " style="left:1096.0px;top:245.7px;font-size:24.5px;color:#2f4550;transform:scaleX(1.0657);">GMT+1:00</span>
<span class="t " style="left:1080.0px;top:333.6px;font-size:25px;color:#6b7a90;transform:scaleX(1.0398);-webkit-text-stroke:0.45px #6b7a90;">Date Format:</span>
<span class="t " style="left:1080.0px;top:406.0px;font-size:25px;color:#6b7a90;transform:scaleX(1.0391);-webkit-text-stroke:0.45px #6b7a90;">Time Format:</span>
<span class="t " style="left:1080.0px;top:477.6px;font-size:25px;color:#6b7a90;transform:scaleX(1.0195);-webkit-text-stroke:0.45px #6b7a90;">First Day:</span>
<span class="t " style="left:1448.7px;top:333.1px;font-size:24.5px;color:#2f4550;transform:scaleX(1.0327);">2025-01-23 (YYYY-MM-DD)</span>
<span class="t " style="left:1448.6px;top:404.7px;font-size:24.5px;color:#2f4550;transform:scaleX(1.0767);">24 hour clock</span>
<span class="t " style="left:1448.6px;top:477.0px;font-size:24.5px;color:#2f4550;transform:scaleX(1.0984);">Monday</span>
<span class="t " style="left:646.2px;top:645.4px;font-size:28px;color:#6b7a90;transform:scaleX(0.9793);font-weight:700;">API Tokens</span>
<span class="t " style="left:646.4px;top:680.4px;font-size:21.5px;color:#8f9bb0;transform:scaleX(1.0453);-webkit-text-stroke:0.3px #8f9bb0;">Configure your API tokens</span>
<span class="t " style="left:2110.1px;top:662.3px;font-size:21px;color:#3d6fb0;transform:scaleX(1.0069);font-weight:700;">Add Token</span>
<span class="t " style="left:590.4px;top:875.0px;font-size:25px;color:#555555;transform:scaleX(1.0417);-webkit-text-stroke:0.45px #555555;">Token name</span>
<span class="t " style="left:1414.7px;top:875.2px;font-size:25px;color:#555555;transform:scaleX(1.0308);-webkit-text-stroke:0.45px #555555;">Start On</span>
<span class="t " style="left:1679.0px;top:875.2px;font-size:25px;color:#555555;transform:scaleX(1.0437);-webkit-text-stroke:0.45px #555555;">End On</span>
<span class="t " style="left:1942.6px;top:875.2px;font-size:25px;color:#555555;transform:scaleX(0.9946);-webkit-text-stroke:0.45px #555555;">Status</span>
<span class="t " style="left:590.4px;top:972.2px;font-size:25px;color:#555555;transform:scaleX(1.0230);">Example 3</span>
<span class="t " style="left:590.4px;top:1055.3px;font-size:25px;color:#555555;transform:scaleX(1.0462);">example 2</span>
<span class="t " style="left:590.3px;top:1138.1px;font-size:25px;color:#555555;transform:scaleX(1.0510);">example token</span>
<span class="t " style="left:1461.0px;top:1055.2px;font-size:25px;color:#999999;transform:scaleX(1.0628);">Immediately</span>
<span class="t " style="left:1761.0px;top:1055.2px;font-size:25px;color:#999999;transform:scaleX(1.0605);">Never</span>
<span class="t " style="left:1994.1px;top:974.3px;font-size:22px;color:#fff;transform:scaleX(1.0179);">Pending</span>
<span class="t " style="left:2004.1px;top:1057.8px;font-size:22px;color:#fff;transform:scaleX(1.0316);">Active</span>
<span class="t " style="left:2004.1px;top:1140.4px;font-size:22px;color:#fff;transform:scaleX(1.0316);">Active</span>
<span class="t " style="left:1510.8px;top:964.1px;font-size:17.2px;color:#fff;transform:scaleX(1.1010);font-weight:700;">2025</span>
<span class="t " style="left:1440.6px;top:987.8px;font-size:22px;color:#555555;transform:scaleX(0.9739);font-weight:700;">10 Jan</span>
<span class="t " style="left:1560.8px;top:987.8px;font-size:22px;color:#555555;transform:scaleX(1.0546);font-weight:700;">14:25</span>
<span class="t " style="left:1775.1px;top:964.1px;font-size:17.2px;color:#fff;transform:scaleX(1.1010);font-weight:700;">2025</span>
<span class="t " style="left:1704.4px;top:987.8px;font-size:22px;color:#555555;transform:scaleX(0.9889);font-weight:700;">31 Jan</span>
<span class="t " style="left:1825.1px;top:987.8px;font-size:22px;color:#555555;transform:scaleX(1.0546);font-weight:700;">14:25</span>
<span class="t " style="left:1510.8px;top:1130.1px;font-size:17.2px;color:#fff;transform:scaleX(1.1010);font-weight:700;">2025</span>
<span class="t " style="left:1446.9px;top:1153.8px;font-size:22px;color:#555555;transform:scaleX(0.9632);font-weight:700;">8 Jan</span>
<span class="t " style="left:1560.8px;top:1153.8px;font-size:22px;color:#555555;transform:scaleX(1.0546);font-weight:700;">14:35</span>
<span class="t " style="left:1775.1px;top:1130.1px;font-size:17.2px;color:#fff;transform:scaleX(1.1010);font-weight:700;">2025</span>
<span class="t " style="left:1702.0px;top:1153.8px;font-size:22px;color:#555555;transform:scaleX(1.0403);font-weight:700;">22 Mar</span>
<span class="t " style="left:1825.1px;top:1153.8px;font-size:22px;color:#555555;transform:scaleX(1.0546);font-weight:700;">14:35</span>
<span class="t " style="left:575.2px;top:1275.7px;font-size:22px;color:#555555;transform:scaleX(1.0299);-webkit-text-stroke:0.35px #555555;">Showing</span>
<span class="t " style="left:685.1px;top:1272.0px;font-size:25.5px;color:#555555;transform:scaleX(1.0480);">10</span>
<span class="t " style="left:794.5px;top:1275.7px;font-size:22px;color:#555555;transform:scaleX(1.1868);-webkit-text-stroke:0.35px #555555;">of</span>
<span class="t " style="left:821.4px;top:1275.7px;font-size:22px;color:#3d6fb0;transform:scaleX(1.1344);-webkit-text-stroke:0.35px #3d6fb0;">3</span>
<span class="t " style="left:842.2px;top:1275.7px;font-size:22px;color:#555555;transform:scaleX(1.0298);-webkit-text-stroke:0.35px #555555;">entries</span>
</div>
</body></html>
